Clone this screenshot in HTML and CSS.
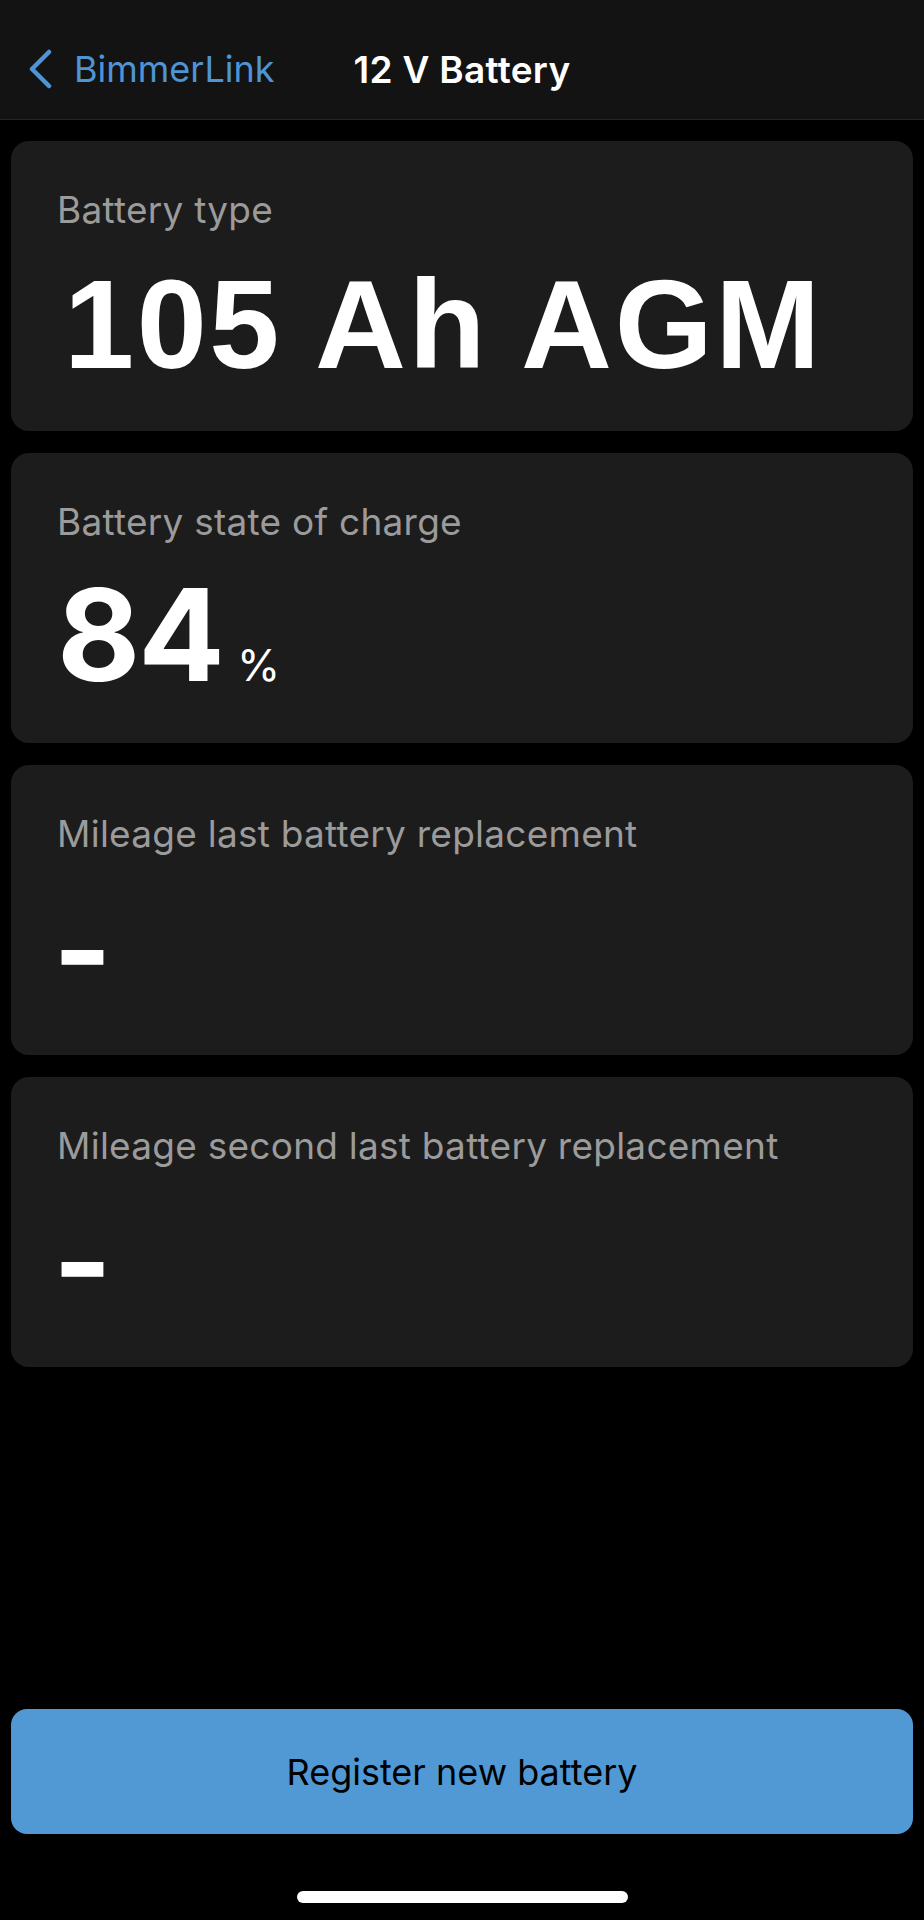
FILE: index.html
```html
<!DOCTYPE html>
<html lang="en">
<head>
    <meta charset="UTF-8">
    <title>12 V Battery</title>
    <link rel="stylesheet" href="styles.css">
</head>
<body>
    <div class="screen">
        <header class="navbar">
            <a class="back" href="#">
                <svg class="chevron" width="26" height="40" viewBox="0 0 26 40">
                    <path d="M22 3 L5 20 L22 37" fill="none" stroke="currentColor" stroke-width="4.5" stroke-linecap="round" stroke-linejoin="round"/>
                </svg>
                <span>BimmerLink</span>
            </a>
            <h1 class="title">12 V Battery</h1>
            <div></div>
        </header>

        <main class="cards">
            <section class="card">
                <div class="label">Battery type</div>
                <div class="value type">105 Ah AGM</div>
            </section>
            <section class="card">
                <div class="label">Battery state of charge</div>
                <div class="value soc">84<span class="unit">%</span></div>
            </section>
            <section class="card">
                <div class="label">Mileage last battery replacement</div>
                <div class="value dash">-</div>
            </section>
            <section class="card">
                <div class="label">Mileage second last battery replacement</div>
                <div class="value dash">-</div>
            </section>
        </main>

        <div class="footer">
            <button class="register">Register new battery</button>
            <div class="home-bar"></div>
        </div>
    </div>
</body>
</html>
```

FILE: styles.css
```css
body {
    margin: 0;
    background: #000;
    font-family: Inter, "Noto Sans", sans-serif;
    color: #fff;
}

.screen {
    width: 924px;
    height: 1920px;
    display: flex;
    flex-direction: column;
}

.navbar {
    box-sizing: border-box;
    height: 120px;
    padding-top: 48px;
    background: #131313;
    border-bottom: 1px solid #262626;
    display: grid;
    grid-template-columns: 1fr auto 1fr;
    align-items: start;
}

.back {
    display: flex;
    align-items: center;
    color: #4f95d6;
    text-decoration: none;
    font-size: 36px;
    line-height: 44px;
    padding-left: 27px;
    margin-top: -1px;
}

.chevron {
    margin-right: 21px;
}

.title {
    margin: 0;
    font-size: 37px;
    line-height: 44px;
    font-weight: 600;
    letter-spacing: 0.3px;
}

.cards {
    padding: 21px 11px 0;
    display: flex;
    flex-direction: column;
    gap: 22px;
}

.card {
    box-sizing: border-box;
    height: 290px;
    padding: 49px 46px 0;
    background: #1c1c1c;
    border-radius: 18px;
}

.label {
    color: #9b9b9b;
    font-size: 37px;
    line-height: 40px;
    letter-spacing: 0.25px;
}

.value {
    margin-top: 32px;
    font-weight: bold;
    font-size: 126px;
    line-height: 126px;
}

.value.type {
    font-family: "Liberation Sans", Arial, sans-serif;
    padding-left: 7px;
    letter-spacing: 2.6px;
}

.value.soc {
    margin-top: 30px;
    font-size: 128px;
    letter-spacing: -2px;
}

.value.dash {
    margin-left: -4px;
}

.unit {
    font-weight: normal;
    font-size: 44px;
    margin-left: 14px;
    letter-spacing: 0;
}

.footer {
    margin-top: auto;
    padding: 0 11px;
    display: flex;
    flex-direction: column;
    align-items: center;
}

.register {
    width: 100%;
    height: 125px;
    border: none;
    border-radius: 16px;
    background: #5199d5;
    color: #000;
    font-family: Inter, sans-serif;
    font-size: 36px;
    cursor: pointer;
}

.home-bar {
    width: 331px;
    height: 12px;
    border-radius: 6px;
    background: #fff;
    margin: 57px 0 17px;
}
```
